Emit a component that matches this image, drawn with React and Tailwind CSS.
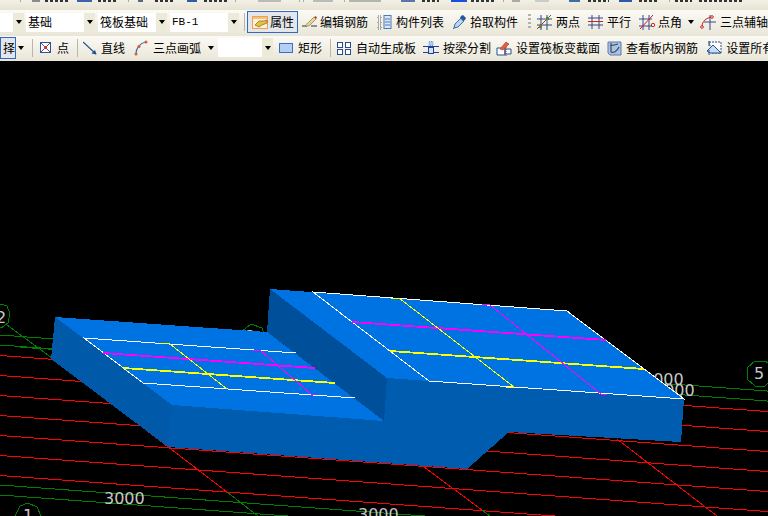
import React from 'react';

const TEXT_MARK = 'bg-[repeating-linear-gradient(90deg,#333_0_3px,transparent_3px_5px)]';

const topMarks = [
  'ml-[20px] w-[1px] bg-[#aaa]',
  'ml-[11px] w-[8px] bg-[#8a8a8a]',
  `ml-[5px] w-[23px] ${TEXT_MARK}`,
  'ml-[9px] w-[15px] bg-[#3a62b0]',
  `ml-[6px] w-[19px] ${TEXT_MARK}`,
  'ml-[11px] w-[1px] bg-[#aaa]',
  'ml-[9px] w-[5px] bg-[#556688]',
  `ml-[12px] w-[20px] ${TEXT_MARK}`,
  'ml-[12px] w-[10px] bg-[#2d5ca8]',
  `ml-[7px] w-[23px] ${TEXT_MARK}`,
  'ml-[8px] w-[1px] bg-[#aaa]',
  'ml-[22px] w-[23px] bg-[#bbb]',
  'ml-[18px] w-[1px] bg-[#aaa]',
  'ml-[3px] w-[1px] bg-[#aaa]',
  'ml-[9px] w-[20px] bg-[#bbb]',
  'ml-[11px] w-[1px] bg-[#aaa]',
  'ml-[4px] w-[32px] bg-[#b5b5b0]',
  'ml-[20px] w-[14px] bg-[#5a76a8]',
  `ml-[7px] w-[17px] ${TEXT_MARK}`,
  'ml-[12px] w-[16px] bg-[#1a50e0]',
  `ml-[4px] w-[23px] ${TEXT_MARK}`,
  'ml-[9px] w-[1px] bg-[#aaa]',
  'ml-[8px] w-[8px] bg-[#aaa]',
  'ml-[15px] w-[14px] bg-[#ccc]',
  'ml-[20px] w-[11px] bg-[#3a70a8]',
  `ml-[8px] w-[21px] ${TEXT_MARK}`,
  'ml-[10px] w-[13px] bg-[#2a5aa8]',
  `ml-[7px] w-[20px] ${TEXT_MARK}`,
  'ml-[10px] w-[1px] bg-[#aaa]',
  `ml-[5px] w-[17px] ${TEXT_MARK}`,
  `ml-[7px] w-[43px] ${TEXT_MARK}`,
];

function Arrow({ className = '' }) {
  return <span className={`h-0 w-0 shrink-0 border-x-[3.5px] border-t-[4px] border-x-transparent border-t-black ${className}`} />;
}

function Combo({ width, text, mono, className = '' }) {
  return (
    <div className={`flex h-[19px] shrink-0 ${className}`}>
      <div className={`flex items-center overflow-hidden bg-white pl-[2px] whitespace-nowrap ${width} ${mono ? "font-['Liberation_Mono'] text-[11px]" : ''}`}>{text}</div>
      <div className="flex w-[11px] items-center justify-center bg-[#ecead9]">
        <Arrow />
      </div>
    </div>
  );
}

function Sep({ className = '' }) {
  return <span className={`h-[18px] w-[1px] shrink-0 bg-[#b9b7aa] ${className}`} />;
}

function Tool({ icon, text, className = '', gap = 'gap-[4px]' }) {
  return (
    <div className={`flex shrink-0 items-center whitespace-nowrap ${gap} ${className}`}>
      {icon}
      <span>{text}</span>
    </div>
  );
}

const Svg = ({ w = 16, children }) => (
  <svg width={w} height="16" viewBox={`0 0 ${w} 16`} fill="none" className="shrink-0">
    {children}
  </svg>
);

const icons = {
  props: (
    <Svg>
      <rect x="0.5" y="2.5" width="15" height="12" fill="#fdf2d8" stroke="#f0a050" />
      <rect x="1" y="3" width="14" height="2" fill="#f6c27a" />
      <path d="M3 11l4-4h5l3-1v3l-5 2-3 2z" fill="#e8c040" stroke="#7a6a20" strokeWidth="0.7" />
    </Svg>
  ),
  rebar: (
    <Svg w={17}>
      <path d="M1 12h5M10 12h6" stroke="#333" />
      <path d="M4 12c1-2 2-2 3-3l6-6 2 2-6 6c-1 1-3 1-5 1z" fill="#e8d890" stroke="#776" strokeWidth="0.7" />
      <path d="M13 3l2-1 1 2-1 1z" fill="#d04030" />
    </Svg>
  ),
  list: (
    <Svg w={15}>
      <path d="M1 2h3v3H1zM1 7h3v3H1zM1 12h3v3H1z" stroke="#666" strokeDasharray="1 1" />
      <rect x="7" y="1.5" width="7" height="13" fill="#dce8f8" stroke="#4a7ab8" />
      <path d="M8 5h5M8 8h5M8 11h5" stroke="#4a7ab8" />
    </Svg>
  ),
  pick: (
    <Svg w={15}>
      <path d="M2 14l1-4 6-6 3 3-6 6z" fill="#bcd4ee" stroke="#3a6ea8" />
      <path d="M9 2l2-1 3 3-1 2-2 1-3-3z" fill="#2a5a98" />
      <path d="M1 15l2-2" stroke="#3a6ea8" />
    </Svg>
  ),
  twoPoint: (
    <Svg>
      <path d="M5 1v15M11 1v15M1 5h15M1 11h15" stroke="#34488a" />
      <path d="M1 15L15 1" stroke="#d02020" />
      <rect x="3" y="11" width="3" height="3" fill="#4a9030" />
      <rect x="10" y="3" width="3" height="3" fill="#4a9030" />
    </Svg>
  ),
  parallel: (
    <Svg>
      <path d="M4 1v14M11 1v14M0 11h15M0 4h15" stroke="#34488a" />
      <path d="M0 7.5h15" stroke="#d02020" />
    </Svg>
  ),
  angle: (
    <Svg>
      <path d="M4 1v15M10 1v15M0 5h13M0 12h13" stroke="#34488a" />
      <path d="M1 15L14 1" stroke="#d02020" />
      <circle cx="14" cy="11" r="1.7" stroke="#d02020" />
    </Svg>
  ),
  threeAux: (
    <Svg>
      <path d="M10 1v15M4 8h12" stroke="#34488a" />
      <path d="M2 13c0-6 4-9 10-10" stroke="#d02020" />
      <circle cx="2" cy="13" r="1.3" fill="#fff" stroke="#d02020" />
      <circle cx="12" cy="3" r="1.3" fill="#fff" stroke="#d02020" />
    </Svg>
  ),
  point: (
    <Svg w={12}>
      <rect x="0.5" y="2.5" width="10" height="10" fill="#fff" stroke="#3a4f9a" />
      <path d="M1 3l9 9M10 3l-9 9" stroke="#3a4f9a" />
      <rect x="4" y="6" width="3" height="3" fill="#e03030" />
    </Svg>
  ),
  line: (
    <Svg w={14}>
      <path d="M0 2l13 12" stroke="#24508e" strokeWidth="1.2" />
      <path d="M13.5 14.500l-5-1 3.500-3.500z" fill="#24508e" />
    </Svg>
  ),
  arc: (
    <Svg w={14}>
      <path d="M2 14C2 8 6 3 12 2" stroke="#3a6ea8" strokeWidth="1.2" />
      <circle cx="2" cy="14" r="1.500" fill="#d06040" />
      <circle cx="5" cy="6.500" r="1.500" fill="#d06040" />
      <circle cx="12" cy="2" r="1.500" fill="#d06040" />
    </Svg>
  ),
  rect: (
    <Svg w={14}>
      <rect x="0.5" y="3.500" width="13" height="9" fill="#b4cef4" stroke="#3a6ec0" />
    </Svg>
  ),
  auto: (
    <Svg w={14}>
      <rect x="0.5" y="2.500" width="5" height="5" fill="#fff" stroke="#2a4a90" />
      <rect x="8.500" y="2.500" width="5" height="5" fill="#fff" stroke="#2a4a90" />
      <rect x="0.5" y="9.500" width="5" height="5" fill="#fff" stroke="#2a4a90" />
      <rect x="8.500" y="9.500" width="5" height="5" fill="#fff" stroke="#2a4a90" />
    </Svg>
  ),
  split: (
    <Svg>
      <path d="M0 6.500h16M0 12.500h16" stroke="#24408e" />
      <rect x="5.500" y="7.500" width="5" height="6" fill="#cfe4fa" stroke="#24408e" />
      <rect x="6" y="1.500" width="4" height="4" fill="#a8ccf4" stroke="#6a9ad8" strokeDasharray="1 1" />
    </Svg>
  ),
  section: (
    <Svg>
      <path d="M1 8h8v7H1zM9 9h6v5H9z" fill="#fff" stroke="#24508e" />
      <path d="M4 9l6-7 3 2-6 6z" fill="#e06040" stroke="#b03020" strokeWidth="0.6" />
      <path d="M10 7v9" stroke="#d02020" strokeDasharray="1 1" />
    </Svg>
  ),
  viewRebar: (
    <Svg w={15}>
      <path d="M1 2h13v13H3L1 13z" fill="#a8c4e6" stroke="#5a7aa8" />
      <path d="M4 3v9c2 1 6 0 8-5M3 6c3-1 5-1 8-2" stroke="#445" strokeWidth="1.200" />
    </Svg>
  ),
  setAll: (
    <Svg>
      <path d="M3 2h12v11H6z" fill="#fff" stroke="#24508e" strokeDasharray="2 1" />
      <path d="M1 11l6-6 8 8H4z" fill="#c4dcf6" stroke="#24508e" />
      <path d="M3 1v5M3 10v5" stroke="#24508e" />
    </Svg>
  ),
};

function Toolbars() {
  return (
    <div className="shrink-0 font-['Noto_Sans_CJK_SC','Liberation_Sans',sans-serif] text-[12px] leading-none text-black">
      <div className="flex h-[10px] overflow-hidden bg-gradient-to-b from-[#f3f1e6] to-[#e6e3d3]">
        {topMarks.map((mark, index) => (
          <span key={index} className={`h-[2px] shrink-0 ${mark}`} />
        ))}
      </div>
      <div className="flex h-[26px] items-center overflow-hidden bg-gradient-to-b from-[#fbfaf4] to-[#e9e6d8] pb-[2px]">
        <Combo width="w-[13px]" />
        <Combo width="w-[58px]" text="基础" className="ml-[2px]" />
        <Combo width="w-[58px]" text="筏板基础" className="ml-[3px]" />
        <Combo width="w-[58px]" text="FB-1" mono className="ml-[3px]" />
        <Sep className="ml-[5px]" />
        <Tool
          icon={icons.props}
          text="属性"
          gap="gap-[2px]"
          className="ml-[2px] h-[22px] w-[51px] border border-[#316ac5] bg-[#e3e6ea] pl-[4px]"
        />
        <Tool icon={icons.rebar} text="编辑钢筋" gap="gap-[2px]" className="ml-[3px]" />
        <Tool icon={icons.list} text="构件列表" className="ml-[9px]" />
        <Tool icon={icons.pick} text="拾取构件" gap="gap-[3px]" className="ml-[8px]" />
        <span className="ml-[10px] h-[16px] w-[3px] shrink-0 bg-[repeating-linear-gradient(180deg,#b5b3a6_0_2px,transparent_2px_4px)]" />
        <Tool icon={icons.twoPoint} text="两点" className="ml-[5px]" />
        <Tool icon={icons.parallel} text="平行" gap="gap-[3px]" className="ml-[8px]" />
        <Tool icon={icons.angle} text="点角" gap="gap-[3px]" className="ml-[8px]" />
        <Arrow className="ml-[6px]" />
        <Tool icon={icons.threeAux} text="三点辅轴" className="ml-[6px]" />
      </div>
      <div className="flex h-[25px] items-center overflow-hidden bg-gradient-to-b from-[#fbfaf4] to-[#e9e6d8] pb-[2px]">
        <div className="flex h-[22px] w-[16px] shrink-0 items-center justify-end border border-[#316ac5] bg-[#e3e6ea]">
          <span>择</span>
        </div>
        <Arrow className="ml-[2px]" />
        <Sep className="ml-[8px]" />
        <Tool icon={icons.point} text="点" gap="gap-[5px]" className="ml-[7px]" />
        <Sep className="ml-[8px]" />
        <Tool icon={icons.line} text="直线" className="ml-[5px]" />
        <Tool icon={icons.arc} text="三点画弧" gap="gap-[5px]" className="ml-[9px]" />
        <Arrow className="ml-[7px]" />
        <Combo width="w-[44px]" className="ml-[4px]" />
        <Tool icon={icons.rect} text="矩形" gap="gap-[5px]" className="ml-[6px]" />
        <Sep className="ml-[8px]" />
        <Tool icon={icons.auto} text="自动生成板" gap="gap-[5px]" className="ml-[6px]" />
        <Tool icon={icons.split} text="按梁分割" className="ml-[7px]" />
        <Tool icon={icons.section} text="设置筏板变截面" className="ml-[5px]" />
        <Tool icon={icons.viewRebar} text="查看板内钢筋" className="ml-[7px]" />
        <Tool icon={icons.setAll} text="设置所有" gap="gap-[4px]" className="ml-[8px]" />
      </div>
    </div>
  );
}

const RED = '#ff0000';
const GREEN = '#008000';
const gridY = (y0, x) => y0 + 0.073 * x;

function Drawing() {
  const reds = [355.5, 375.5, 395.5, 415.5, 435.5, 455.5, 475.5];
  const greens = [335, 345, 485, 495];
  return (
    <svg viewBox="0 61 768 455" width="768" height="455" shapeRendering="crispEdges" className="block">
      {/* axis grid */}
      {reds.map((y) => (
        <line key={y} x1="0" y1={y} x2="768" y2={gridY(y, 768)} stroke={RED} />
      ))}
      {greens.map((y) => (
        <line key={y} x1="0" y1={y} x2="768" y2={gridY(y, 768)} stroke={GREEN} />
      ))}
      <line x1="20" y1="347" x2="52" y2="349" stroke={GREEN} strokeWidth="1.500" />
      <line x1="7" y1="325" x2="52" y2="358" stroke={GREEN} />
      <line x1="52" y1="358" x2="227" y2="492" stroke={RED} />
      <line x1="227" y1="492" x2="258" y2="516" stroke={GREEN} />
      <line x1="424" y1="467" x2="482" y2="510" stroke={RED} />
      <line x1="482" y1="510" x2="490" y2="516" stroke={GREEN} />
      <line x1="617" y1="439" x2="717" y2="516" stroke={RED} />
      <polygon points="-3,308 1,304 7,306 10,314 8,323 1,328 -3,326" fill="none" stroke={GREEN} />
      <polygon points="20,506 28,503 37,507 41,516 15,516" fill="none" stroke={GREEN} />
      <polygon points="241,332 251,324 262,328 266,340 240,340" fill="none" stroke={GREEN} />
      <polygon points="747,368 755,361 765,361 768,363 768,383 765,386 755,386 747,379" fill="none" stroke={GREEN} />
      <g fontFamily="'DejaVu Sans', sans-serif" fontSize="16" fill="#c8c8c8" shapeRendering="auto">
        <text x="-4" y="323">2</text>
        <text x="23" y="521">1</text>
        <text x="245" y="342">3</text>
        <text x="754" y="379">5</text>
        <text x="104" y="504">3000</text>
        <text x="358" y="520">3000</text>
        <text x="643" y="385">3000</text>
        <text x="654" y="396">3000</text>
      </g>

      {/* slabs */}
      <polygon points="172,405 384,421 387,378 684,399 681,442 509,432 467,469 168,447" fill="#005cae" />
      <polygon points="55,317 172,405 168,447 51,359" fill="#0059a9" />
      <polygon points="270,289 387,378 384,421 267,332" fill="#004f9a" />
      <polygon points="55,317 267,332 384,421 172,405" fill="#0073e2" />
      <polygon points="270,289 567,311 684,399 387,378" fill="#0073e2" />

      {/* left slab lines */}
      <polyline points="296,353 84,338 143,383 355,398" fill="none" stroke="#fff" />
      <line x1="103" y1="353" x2="315" y2="368" stroke="#ff00ff" strokeWidth="1.800" />
      <line x1="123" y1="368" x2="335" y2="383" stroke="#ffff00" strokeWidth="1.800" />
      <polyline points="160,343 170,344 227,389" fill="none" stroke="#ffff00" />
      <polyline points="253,350 261,351 311,394 315,394" fill="none" stroke="#ff00ff" />

      {/* right slab lines */}
      <polygon points="313,292 567,311 684,399 429,381" fill="none" stroke="#fff" />
      <line x1="352" y1="322" x2="606" y2="340" stroke="#ff00ff" strokeWidth="1.800" />
      <line x1="390" y1="351" x2="644" y2="369" stroke="#ffff00" strokeWidth="1.800" />
      <polyline points="391,298 399,298 514,387 506,387" fill="none" stroke="#ffff00" />
      <polyline points="482,304 490,305 601,394 607,394" fill="none" stroke="#ff00ff" />
    </svg>
  );
}

export default function App() {
  return (
    <div className="flex h-[516px] w-[768px] flex-col overflow-hidden bg-black">
      <Toolbars />
      <Drawing />
    </div>
  );
}
